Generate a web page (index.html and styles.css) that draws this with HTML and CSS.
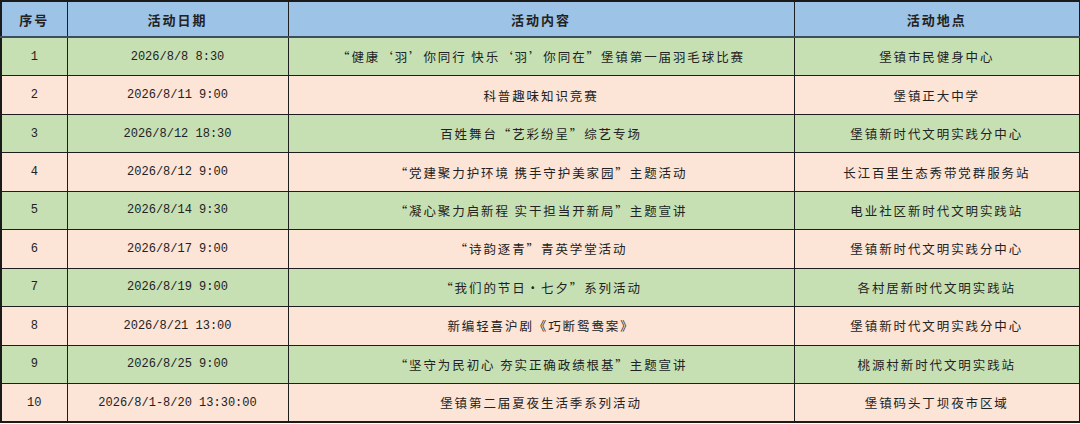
FILE: index.html
```html
<!DOCTYPE html>
<html lang="zh">
<head>
<meta charset="utf-8">
<link rel="stylesheet" href="styles.css">
</head>
<body>
<table class="sched">
  <colgroup>
    <col class="c-no"><col class="c-date"><col class="c-content"><col class="c-place">
  </colgroup>
  <thead>
    <tr><th>序号</th><th>活动日期</th><th>活动内容</th><th>活动地点</th></tr>
  </thead>
  <tbody>
    <tr class="g"><td class="num">1</td><td class="num">2026/8/8 8:30</td><td>“健康‘羽’你同行 快乐‘羽’你同在”堡镇第一届羽毛球比赛</td><td>堡镇市民健身中心</td></tr>
    <tr class="p"><td class="num">2</td><td class="num">2026/8/11 9:00</td><td>科普趣味知识竞赛</td><td>堡镇正大中学</td></tr>
    <tr class="g"><td class="num">3</td><td class="num">2026/8/12 18:30</td><td>百姓舞台“艺彩纷呈”综艺专场</td><td>堡镇新时代文明实践分中心</td></tr>
    <tr class="p"><td class="num">4</td><td class="num">2026/8/12 9:00</td><td>“党建聚力护环境 携手守护美家园”主题活动</td><td>长江百里生态秀带党群服务站</td></tr>
    <tr class="g"><td class="num">5</td><td class="num">2026/8/14 9:30</td><td>“凝心聚力启新程 实干担当开新局”主题宣讲</td><td>电业社区新时代文明实践站</td></tr>
    <tr class="p"><td class="num">6</td><td class="num">2026/8/17 9:00</td><td>“诗韵逐青”青英学堂活动</td><td>堡镇新时代文明实践分中心</td></tr>
    <tr class="g"><td class="num">7</td><td class="num">2026/8/19 9:00</td><td>“我们的节日·七夕”系列活动</td><td>各村居新时代文明实践站</td></tr>
    <tr class="p"><td class="num">8</td><td class="num">2026/8/21 13:00</td><td>新编轻喜沪剧《巧断鸳鸯案》</td><td>堡镇新时代文明实践分中心</td></tr>
    <tr class="g"><td class="num">9</td><td class="num">2026/8/25 9:00</td><td>“坚守为民初心 夯实正确政绩根基”主题宣讲</td><td>桃源村新时代文明实践站</td></tr>
    <tr class="p"><td class="num">10</td><td class="num">2026/8/1-8/20 13:30:00</td><td>堡镇第二届夏夜生活季系列活动</td><td>堡镇码头丁坝夜市区域</td></tr>
  </tbody>
</table>
</body>
</html>
```

FILE: styles.css
```css
html, body {
  margin: 0;
  padding: 0;
  background: #ffffff;
}
.sched {
  border-collapse: collapse;
  table-layout: fixed;
  width: 1079px;
  border: 2px solid #1a1a1a;
  font-family: "Noto Sans CJK SC", "Noto Sans", sans-serif;
  color: #222222;
}
.c-no { width: 66px; }
.c-date { width: 221px; }
.c-content { width: 506px; }
.c-place { width: 286px; }
.sched th,
.sched td {
  border: 1px solid #1e1e1e;
  text-align: center;
  vertical-align: middle;
  padding: 0;
  white-space: nowrap;
  overflow: hidden;
}
.sched th {
  height: 34px;
  background: #9dc3e6;
  font-size: 13px;
  font-weight: 700;
  letter-spacing: 2px;
  border-bottom: 2px solid #3d4f5e;
}
.sched td {
  height: 37.45px;
  font-size: 12.5px;
  letter-spacing: 1.9px;
}
.sched td.num {
  font-family: "Liberation Mono", "DejaVu Sans Mono", monospace;
  font-size: 12px;
  letter-spacing: 0;
}
.sched tr.g td { background: #c6e0b4; }
.sched tr.p td { background: #fce4d6; }
.sched tbody tr + tr td { border-top: 1px solid #555555; }
```
